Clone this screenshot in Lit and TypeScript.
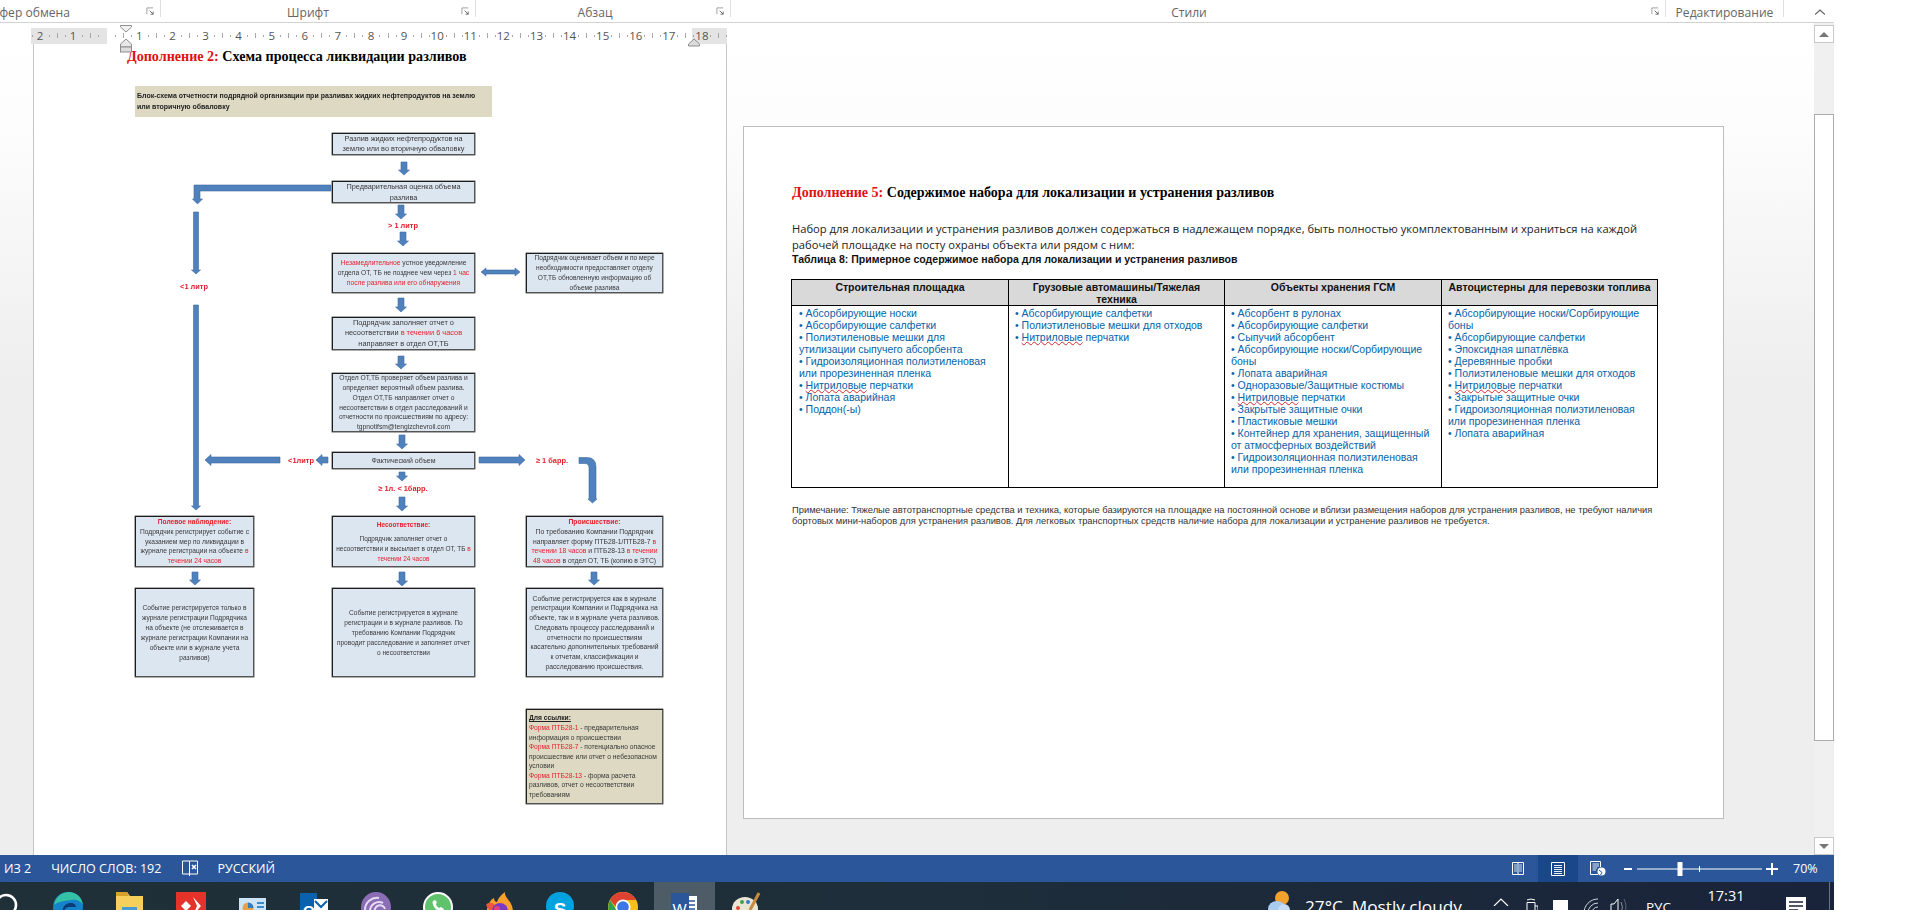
import {LitElement, html, css, svg} from 'lit';
import {customElement} from 'lit/decorators.js';

// canvas origin of the first page, node coords below are screen coords
const OX = 33;
const OY = 44;

const r = (t: string) => html`<span class="red">${t}</span>`;
const rb = (t: string) => html`<span class="red bold">${t}</span>`;

const NODES = [
  {x: 332, y: 133, w: 143, h: 22, fs: 7.3, lh: 10, t: html`Разлив жидких нефтепродуктов на<br />землю или во вторичную обваловку`},
  {x: 332, y: 181, w: 143, h: 22, fs: 7.3, lh: 11, t: html`Предварительная оценка объема<br />разлива`},
  {x: 332, y: 253, w: 143, h: 40, fs: 6.7, lh: 10, t: html`${r('Незамедлительное')} устное уведомление<br />отдела ОТ, ТБ не позднее чем через ${r('1 час')}<br />${r('после разлива или его обнаружения')}`},
  {x: 526, y: 253, w: 137, h: 40, fs: 6.6, lh: 10, t: html`Подрядчик оценивает объем и по мере<br />необходимости предоставляет отделу<br />ОТ,ТБ обновленную информацию об<br />объеме разлива`},
  {x: 332, y: 317, w: 143, h: 33, fs: 7.4, lh: 10.5, t: html`Подрядчик заполняет отчет о<br />несоответствии ${r('в течении 6 часов')}<br />направляет в отдел ОТ,ТБ`},
  {x: 332, y: 373, w: 143, h: 59, fs: 6.7, lh: 9.8, t: html`Отдел ОТ,ТБ проверяет объем разлива и<br />определяет вероятный объем разлива.<br />Отдел ОТ,ТБ направляет отчет о<br />несоответствии в отдел расследований и<br />отчетности по происшествиям по адресу:<br />tgpnotifsm@tengizchevroil.com`},
  {x: 332, y: 452, w: 143, h: 17, fs: 7, lh: 10, t: html`Фактический объем`},
  {x: 135, y: 516, w: 119, h: 51, fs: 6.65, lh: 9.7, t: html`${rb('Полевое наблюдение:')}<br />Подрядчик регистрирует событие с<br />указанием мер по ликвидации в<br />журнале регистрации на объекте ${r('в')}<br />${r('течении 24 часов')}`},
  {x: 332, y: 516, w: 143, h: 51, fs: 6.45, lh: 9.7, t: html`${rb('Несоответствие:')}<br /><span class="gap"></span>Подрядчик заполняет отчет о<br />несоответствии и высылает в отдел ОТ, ТБ ${r('в')}<br />${r('течении 24 часов')}`},
  {x: 526, y: 516, w: 137, h: 51, fs: 6.8, lh: 9.7, t: html`${rb('Происшествие:')}<br />По требованию Компании Подрядчик<br />направляет форму ПТБ28-1/ПТБ28-7 ${r('в')}<br />${r('течении 18 часов')} и ПТБ28-13 ${r('в течении')}<br />${r('48 часов')} в отдел ОТ, ТБ (копию в ЭТС)`},
  {x: 135, y: 588, w: 119, h: 89, fs: 6.6, lh: 10, t: html`Событие регистрируется только в<br />журнале регистрации Подрядчика<br />на объекте (не отслеживается в<br />журнале регистрации Компании на<br />объекте или в журнале учета<br />разливов)`},
  {x: 332, y: 588, w: 143, h: 89, fs: 6.55, lh: 10, t: html`Событие регистрируется в журнале<br />регистрации и в журнале разливов. По<br />требованию Компании Подрядчик<br />проводит расследование и заполняет отчет<br />о несоответствии`},
  {x: 526, y: 588, w: 137, h: 89, fs: 6.75, lh: 9.7, t: html`Событие регистрируется как в журнале<br />регистрации Компании и Подрядчика на<br />объекте, так и в журнале учета разливов.<br />Следовать процессу расследований и<br />отчетности по происшествиям<br />касательно дополнительных требований<br />к отчетам, классификации и<br />расследованию происшествия.`},
];

const LABELS = [
  {x: 403, y: 225, t: '> 1 литр'},
  {x: 194, y: 286, t: '<1 литр'},
  {x: 301, y: 460, t: '<1литр'},
  {x: 552, y: 460, t: '≥ 1 барр.'},
  {x: 403, y: 488, t: '≥ 1л. < 1барр.'},
];

// [x, y1, y2]
const DOWN: number[][] = [
  [404, 162, 175], [401, 205, 219], [403, 232, 246], [401, 298, 312], [401, 356, 369],
  [402, 435, 449], [402, 472, 481], [402, 497, 511], [195, 572, 585], [402, 572, 586], [594, 572, 585],
];

function down(x: number, y1: number, y2: number, s = 3, h = 5.5, hl = 5) {
  return `M${x - s} ${y1}H${x + s}V${y2 - hl}H${x + h}L${x} ${y2}L${x - h} ${y2 - hl}H${x - s}Z`;
}
function left(x1: number, x2: number, y: number) {
  return `M${x2} ${y - 3}V${y + 3}H${x1 + 6}V${y + 5.5}L${x1} ${y}L${x1 + 6} ${y - 5.5}V${y - 3}Z`;
}
function right(x1: number, x2: number, y: number) {
  return `M${x1} ${y - 3}V${y + 3}H${x2 - 6}V${y + 5.5}L${x2} ${y}L${x2 - 6} ${y - 5.5}V${y - 3}Z`;
}

const ARROWS = [
  ...DOWN.map(([x, a, b]) => down(x, a, b)),
  down(196, 212, 274, 2.5, 4.5, 4),
  down(196, 305, 510, 2.5, 4.5, 4),
  'M331 185H194V199H192.5L197.5 204L202.5 199H200V191H331Z',
  `M481 272L486 268V270H515V268L520 272L515 276V274H486V276Z`,
  left(205, 280, 460),
  left(316, 328, 460),
  right(479, 525, 460),
  'M579 457.5H587Q596 457.5 596 467V499H597L592.5 503L588 499H589V468Q589 463.5 585 463.5H579Z',
];

const COLS = [
  {
    head: html`Строительная площадка`,
    items: [
      'Абсорбирующие носки', 'Абсорбирующие салфетки', 'Полиэтиленовые мешки для\nутилизации сыпучего абсорбента',
      'Гидроизоляционная полиэтиленовая\nили прорезиненная пленка', 'Нитриловые перчатки', 'Лопата аварийная', 'Поддон(-ы)',
    ],
  },
  {
    head: html`Грузовые автомашины/Тяжелая<br />техника`,
    items: ['Абсорбирующие салфетки', 'Полиэтиленовые мешки для отходов', 'Нитриловые перчатки'],
  },
  {
    head: html`Объекты хранения ГСМ`,
    items: [
      'Абсорбент в рулонах', 'Абсорбирующие салфетки', 'Сыпучий абсорбент', 'Абсорбирующие носки/Сорбирующие\nбоны',
      'Лопата аварийная', 'Одноразовые/Защитные костюмы', 'Нитриловые перчатки', 'Закрытые защитные очки', 'Пластиковые мешки',
      'Контейнер для хранения, защищенный\nот атмосферных воздействий', 'Гидроизоляционная полиэтиленовая\nили прорезиненная пленка',
    ],
  },
  {
    head: html`Автоцистерны для перевозки топлива`,
    items: [
      'Абсорбирующие носки/Сорбирующие\nбоны', 'Абсорбирующие салфетки', 'Эпоксидная шпатлёвка', 'Деревянные пробки',
      'Полиэтиленовые мешки для отходов', 'Нитриловые перчатки', 'Закрытые защитные очки',
      'Гидроизоляционная полиэтиленовая\nили прорезиненная пленка', 'Лопата аварийная',
    ],
  },
];

const RULER = ['2', '1', '', ...Array.from({length: 18}, (_, i) => String(i + 1)), ''];

const launcher = svg`<svg class="launcher" viewBox="0 0 10 10"><path d="M1 8V1H8" fill="none" stroke="#9a9a9a"/><path d="M4 4L8 8M8 5V8H5" fill="none" stroke="#666"/></svg>`;

const TASK_ICONS = [
  svg`<circle cx="15" cy="13" r="10" fill="none" stroke="#fff" stroke-width="2.6"/>`,
  svg`<circle cx="15" cy="15" r="15" fill="#1583c9"/><path d="M1 13C3 3 11 0 16 0c7 0 13 5 14 13c-2-4-7-6-12-5C10 9 5 10 1 13Z" fill="#35c1a6"/><path d="M10 22c-2-7 3-11 8-11c3 0 5 2 5 4H16c-3 0-5 3-6 7Z" fill="#0c3d78"/>`,
  svg`<path d="M2 0H13L16 4H29V30H2Z" fill="#f6cf5c"/><path d="M2 0H13L15 4H2Z" fill="#d9a02a"/><rect x="8" y="15" width="15" height="15" fill="#4a9bd4"/>`,
  svg`<rect width="30" height="30" fill="#e5332a"/><path d="M10 9L15 14L10 19L5 14Z" fill="#fff"/><path d="M17 5L25 14L17 23L21 14Z" fill="#fff"/>`,
  svg`<rect x="1" y="6" width="27" height="22" fill="#cbe4f7"/><circle cx="10" cy="16" r="5.5" fill="#e9a04c"/><path d="M10 16V10.5A5.5 5.5 0 0 1 15.5 16Z" fill="#2f7fc1"/><path d="M19 11h7M19 15h7M19 19h7" stroke="#3a8bcb" stroke-width="2"/>`,
  svg`<rect x="1" y="1" width="17" height="29" fill="#0a62ae"/><rect x="15" y="7" width="14" height="14" fill="#fff"/><path d="M16 9l6 6l6-6" fill="none" stroke="#0a62ae" stroke-width="2"/><text x="4" y="24" font-family="Liberation Sans" font-weight="700" font-size="15" fill="#fff">O</text>`,
  svg`<circle cx="15" cy="15" r="15" fill="#8a6db5"/><path d="M9 30V19A9 9 0 0 1 22 11M14 30V20A5 5 0 0 1 24 17M4 28V18A12 12 0 0 1 18 6" fill="none" stroke="#e5dcf2" stroke-width="2"/>`,
  svg`<circle cx="15" cy="15" r="14" fill="#5fc26c" stroke="#fff" stroke-width="2"/><path d="M10 9c-2 4 4 11 9 11l2-3l-3-2l-2 1c-2-1-3-3-3-4l1-2l-2-2Z" fill="#fff"/>`,
  svg`<path d="M2 30C0 18 4 8 9 6C9 9 11 10 12 10C13 6 16 3 20 0C19 6 28 9 28 20V30Z" fill="#f9a02c"/><path d="M1 13c2-3 6-3 9 0l-4 8Z" fill="#f0563a"/><circle cx="15" cy="19" r="8" fill="#7a3bc0"/><circle cx="12" cy="17" r="3" fill="#e8407a"/>`,
  svg`<circle cx="14" cy="14" r="14" fill="#00a3e0"/><text x="14" y="24" text-anchor="middle" font-family="Liberation Sans" font-weight="700" font-size="19" fill="#fff">S</text>`,
  svg`<circle cx="15" cy="15" r="15" fill="#f2c21a"/><path d="M15 0A15 15 0 0 1 28 8H15A7 7 0 0 0 8 15L2 8A15 15 0 0 1 15 0Z" fill="#dd4132"/><path d="M2 8L9 19L15 30A15 15 0 0 1 2 8Z" fill="#2fa24f"/><circle cx="15" cy="15" r="7.5" fill="#fff"/><circle cx="15" cy="15" r="5.8" fill="#3b78e7"/>`,
  svg`<rect x="14" y="4" width="13" height="24" fill="#fff"/><path d="M17 9h8M17 13h8M17 17h8M17 21h8" stroke="#2b579a" stroke-width="1.6"/><rect x="1" y="1" width="18" height="29" fill="#2b579a"/><text x="2.5" y="22" font-family="Liberation Sans" font-size="15" fill="#fff">W</text>`,
  svg`<ellipse cx="14" cy="17" rx="13" ry="12" fill="#e9e5d3"/><circle cx="7" cy="16" r="2" fill="#e0483c"/><circle cx="11" cy="10" r="2" fill="#3fa34d"/><circle cx="17" cy="10" r="2" fill="#3a78c9"/><circle cx="9" cy="22" r="2" fill="#e5b42c"/><path d="M19 18L28 1" stroke="#c98a3a" stroke-width="3"/>`,
];

@customElement('app-root')
export class AppRoot extends LitElement {
  static styles = css`
    :host {
      display: block;
      width: 1920px;
      height: 910px;
      background: #fff;
      overflow: hidden;
      font-family: 'Liberation Sans', sans-serif;
    }
    .window {
      width: 1834px;
      height: 910px;
      display: flex;
      flex-direction: column;
    }

    /* ribbon labels */
    .ribbon {
      height: 22px;
      flex: none;
      display: flex;
      border-bottom: 1px solid #d2d2d2;
      font: 12.1px 'Open Sans', sans-serif;
      color: #666;
    }
    .group {
      position: relative;
      height: 10px;
      padding-top: 7px;
      display: flex;
      justify-content: center;
      align-items: center;
      box-sizing: content-box;
      border-right: 1px solid #e0e0e0;
      white-space: nowrap;
    }
    .launcher {
      position: absolute;
      right: 5px;
      top: 7px;
      width: 9px;
      height: 9px;
    }
    .collapse {
      margin-left: 31px;
      margin-top: 9px;
      width: 10px;
      height: 6px;
    }

    /* document area */
    .work {
      flex: 1;
      display: flex;
      min-height: 0;
    }
    .doc {
      flex: 1;
      display: flex;
      padding-left: 31px;
      background: linear-gradient(#fff 0, #fdfdfd 100px, #eeeeee 360px);
      overflow: hidden;
    }
    .left-col {
      position: relative;
      width: 696px;
      display: flex;
      flex-direction: column;
    }
    .ruler {
      margin-top: 5px;
      height: 16px;
      flex: none;
      background: linear-gradient(90deg, #e4e4e4 76px, #fff 76px, #fff 661px, #e4e4e4 661px);
      overflow: hidden;
      display: flex;
      position: relative;
      z-index: 2;
    }
    .ruler-cells {
      display: flex;
      margin-left: -7.5px;
    }
    .cell {
      width: 33.1px;
      flex: none;
      text-align: center;
      font: 11.5px/16px 'Open Sans', sans-serif;
      color: #555;
      background-image: linear-gradient(#a8a8a8, #a8a8a8), linear-gradient(#a8a8a8, #a8a8a8), linear-gradient(#a8a8a8, #a8a8a8);
      background-repeat: no-repeat;
      background-size: 1px 2px, 1px 5px, 1px 2px;
      background-position: 8px 7px, 0 5px, 25px 7px;
    }
    .marks {
      position: absolute;
      left: 0;
      top: 0;
      z-index: 3;
    }
    .page1 {
      position: relative;
      flex: 1;
      margin-left: 2px;
      background: #fff;
      border-left: 1px solid #c6c6c6;
      border-right: 1px solid #c6c6c6;
      box-sizing: border-box;
      overflow: hidden;
    }
    .title1 {
      font: 700 14.1px/16px 'Liberation Serif', serif;
      color: #000;
      padding: 4px 0 0 93px;
      white-space: nowrap;
    }
    .title-red {
      color: #e01010;
    }
    .chart {
      position: absolute;
      left: -1px;
      top: 0;
      width: 694px;
      height: 811px;
      filter: blur(0.35px);
    }
    .chart svg {
      position: absolute;
      left: 0;
      top: 0;
    }
    .banner {
      position: absolute;
      background: #ddd9c3;
      font-weight: 700;
      color: #222;
      font-size: 7px;
      line-height: 11px;
      padding: 4px 2px;
      box-sizing: border-box;
      white-space: nowrap;
    }
    .node {
      position: absolute;
      box-sizing: border-box;
      display: flex;
      align-items: center;
      justify-content: center;
      text-align: center;
      white-space: nowrap;
      background: #dce6f1;
      border: 1px solid #1d1d1d;
      border-bottom-color: #555;
      border-right-color: #555;
      box-shadow: 0 0 0 0.4px #333;
      color: #383838;
    }
    .legend {
      background: #ddd9c3;
      justify-content: flex-start;
      text-align: left;
      padding-left: 2px;
    }
    .red {
      color: #e4202c;
    }
    .bold {
      font-weight: 700;
    }
    .gap {
      display: block;
      height: 5px;
    }
    .legend-head {
      font-weight: 700;
      text-decoration: underline;
      color: #222;
    }
    .tag {
      position: absolute;
      transform: translate(-50%, -50%);
      color: #e4202c;
      font-weight: 700;
      font-size: 7.4px;
      white-space: nowrap;
    }

    /* second page */
    .page2 {
      margin: 103px 0 0 16px;
      width: 981px;
      height: 693px;
      flex: none;
      box-sizing: border-box;
      background: #fff;
      border: 1px solid #bdbdbd;
      padding: 56px 0 0 48px;
    }
    .title2 {
      font: 700 14.03px/18px 'Liberation Serif', serif;
      color: #000;
      white-space: nowrap;
    }
    .para {
      margin-top: 20px;
      font: 11.2px/16px 'Open Sans', sans-serif;
      color: #222;
      white-space: nowrap;
    }
    .caption {
      font: 700 10.55px/13px 'Liberation Sans', sans-serif;
      color: #111;
      white-space: nowrap;
    }
    table {
      margin: 13px 0 0 -1px;
      border-collapse: collapse;
      table-layout: fixed;
      width: 866px;
      font-size: 10.5px;
      line-height: 12px;
    }
    th {
      height: 25px;
      box-sizing: border-box;
      background: #d9d9d9;
      border: 1px solid #000;
      font-weight: 700;
      color: #111;
      vertical-align: top;
      padding: 1px 0 0;
      white-space: nowrap;
      line-height: 12px;
    }
    td {
      height: 182px;
      box-sizing: border-box;
      border: 1px solid #000;
      vertical-align: top;
      padding: 1px 0 0 6px;
      color: #0563a8;
      white-space: pre-line;
    }
    td:first-child {
      padding-left: 7px;
    }
    .sp {
      text-decoration: underline wavy #d0282c 1px;
      text-underline-offset: 0;
    }
    .note {
      margin-top: 17px;
      font-size: 9.35px;
      line-height: 11px;
      color: #333;
      white-space: nowrap;
    }

    /* scrollbar */
    .scroll {
      width: 20px;
      flex: none;
      display: flex;
      flex-direction: column;
      background: #f0f0f0;
      padding-top: 2px;
      box-sizing: border-box;
    }
    .sbtn {
      height: 18px;
      flex: none;
      box-sizing: border-box;
      background: #fff;
      border: 1px solid #c8c8c8;
      display: flex;
      align-items: center;
      justify-content: center;
    }
    .track {
      flex: 1;
      padding-top: 71px;
      padding-bottom: 96px;
      display: flex;
    }
    .thumb {
      flex: 1;
      background: #fff;
      border: 1px solid #ababab;
    }

    /* status bar */
    .status {
      height: 27px;
      flex: none;
      background: #2b579a;
      color: #fff;
      display: flex;
      align-items: center;
      font: 12.5px 'Open Sans', sans-serif;
      white-space: nowrap;
    }
    .status .sp1 {
      margin-left: 4px;
    }
    .status .sp2 {
      margin-left: 20px;
    }
    .status .sp3 {
      margin-left: 20px;
      display: flex;
    }
    .status .sp4 {
      margin-left: 18px;
    }
    .status-right {
      margin-left: auto;
      display: flex;
      align-items: center;
      height: 100%;
    }
    .view {
      height: 100%;
      display: flex;
      align-items: center;
      justify-content: center;
      width: 40px;
    }
    .view.on {
      background: #19478a;
    }
    .zoom {
      display: flex;
      margin: 0 15px 0 6px;
    }
    .pct {
      width: 24px;
      margin-right: 17px;
      text-align: center;
    }

    /* taskbar */
    .taskbar {
      height: 28px;
      flex: none;
      display: flex;
      overflow: hidden;
      background: linear-gradient(90deg, #1f3038, #1e2e3a 50%, #19233a);
      position: relative;
    }
    .task {
      width: 61.7px;
      flex: none;
      display: flex;
      justify-content: center;
      padding-top: 10px;
      box-sizing: border-box;
      height: 48px;
    }
    .task svg {
      width: 30px;
      height: 30px;
      flex: none;
    }
    .task.on {
      background: #4d5c66;
    }
    .tasks {
      display: flex;
      margin-left: -24.85px;
    }
    .tray {
      margin-left: auto;
      display: flex;
      color: #fff;
      white-space: nowrap;
      font-family: 'Open Sans', sans-serif;
      width: 567px;
      height: 48px;
      flex: none;
    }
    .weather {
      width: 24px;
      height: 30px;
      margin-top: 8px;
      flex: none;
    }
    .wtext {
      margin-left: 14px;
      width: 188px;
      font-size: 17.2px;
      line-height: 20px;
      padding-top: 15px;
      color: #fff;
    }
    .tico {
      margin-top: 16px;
      flex: none;
    }
    .lang {
      margin-left: 18px;
      font-size: 13.5px;
      line-height: 16px;
      padding-top: 17px;
      width: 28px;
    }
    .clock {
      margin-left: 32px;
      font-size: 14.5px;
      line-height: 18px;
      padding-top: 5px;
      width: 40px;
      text-align: center;
    }
    .notif {
      margin: 15px 0 0 40px;
      flex: none;
    }
    .edge-line {
      position: absolute;
      left: 1829px;
      top: 0;
      width: 1px;
      height: 100%;
      background: #6a7480;
    }
  `;

  private renderRuler() {
    return html`<div class="ruler">
      <div class="ruler-cells">${RULER.map((n) => html`<div class="cell">${n}</div>`)}</div>
    </div>`;
  }

  private renderMarks() {
    return html`<svg class="marks" width="696" height="30" viewBox="0 0 696 30">
      <path d="M89.5 2.5H100.5V4L95 9L89.5 4Z" fill="#f2f2f2" stroke="#8f8f8f" />
      <path d="M95 16L100.5 21V24H89.5V21Z" fill="#e8e8e8" stroke="#8f8f8f" />
      <rect x="89.5" y="24" width="11" height="5" fill="#dcdcdc" stroke="#8f8f8f" />
      <path d="M663 16L668.5 21V23H657.5V21Z" fill="#dcdcdc" stroke="#8f8f8f" />
    </svg>`;
  }

  private renderChart() {
    return html`<div class="chart">
      <div class="banner" style="left:${135 - OX}px;top:${86 - OY}px;width:357px;height:31px">
        Блок-схема отчетности подрядной организации при разливах жидких нефтепродуктов на землю<br />или вторичную обваловку
      </div>
      ${NODES.map(
        (n) => html`<div class="node" style="left:${n.x - OX}px;top:${n.y - OY}px;width:${n.w}px;height:${n.h}px;font-size:${n.fs}px;line-height:${n.lh}px"><div>${n.t}</div></div>`,
      )}
      <div class="node legend" style="left:${526 - OX}px;top:${709 - OY}px;width:137px;height:95px;font-size:6.7px;line-height:9.6px">
        <div>
          <span class="legend-head">Для ссылки:</span><br />
          ${r('Форма ПТБ28-1')} - предварительная<br />информация о происшествии<br />
          ${r('Форма ПТБ28-7')} - потенциально опасное<br />происшествие или отчет о небезопасном<br />условии<br />
          ${r('Форма ПТБ28-13')} - форма расчета<br />разливов, отчет о несоответствии<br />требованиям
        </div>
      </div>
      ${LABELS.map((l) => html`<div class="tag" style="left:${l.x - OX}px;top:${l.y - OY}px">${l.t}</div>`)}
      <svg width="694" height="811" viewBox="${OX} ${OY} 694 811">
        ${ARROWS.map((d) => svg`<path d=${d} fill="#4f81bd" stroke="#3f6c9f" stroke-width="0.6"/>`)}
      </svg>
    </div>`;
  }

  private renderItem(text: string) {
    const key = 'Нитриловые';
    if (text.startsWith(key)) {
      return html`• <span class="sp">${key}</span>${text.slice(key.length)}`;
    }
    return html`• ${text}`;
  }

  private renderPage2() {
    return html`<div class="page2">
      <div class="title2"><span class="title-red">Дополнение 5:</span> Содержимое набора для локализации и устранения разливов</div>
      <div class="para">
        Набор для локализации и устранения разливов должен содержаться в надлежащем порядке, быть полностью укомплектованным и храниться на каждой<br />
        рабочей площадке на посту охраны объекта или рядом с ним:
      </div>
      <div class="caption">Таблица 8: Примерное содержимое набора для локализации и устранения разливов</div>
      <table>
        <colgroup><col style="width:217px" /><col style="width:216px" /><col style="width:217px" /><col style="width:216px" /></colgroup>
        <tr>${COLS.map((c) => html`<th>${c.head}</th>`)}</tr>
        <tr>${COLS.map((c) => html`<td>${c.items.map((t) => html`<div>${this.renderItem(t)}</div>`)}</td>`)}</tr>
      </table>
      <div class="note">
        Примечание: Тяжелые автотранспортные средства и техника, которые базируются на площадке на постоянной основе и вблизи размещения наборов для устранения разливов, не требуют наличия<br />
        бортовых мини-наборов для устранения разливов. Для легковых транспортных средств наличие набора для локализации и устранение разливов не требуется.
      </div>
    </div>`;
  }

  private renderStatus() {
    return html`<div class="status">
      <span class="sp1">ИЗ 2</span>
      <span class="sp2">ЧИСЛО СЛОВ: 192</span>
      <span class="sp3"
        ><svg width="18" height="17" viewBox="0 0 18 17" fill="none" stroke="#fff">
          <path d="M8.5 1H1.5V14H8.5M8.5 1V16M8.5 1H16.5V14H8.5" />
          <path d="M11 5L15 9M15 5L11 9" stroke-width="1.6" /></svg
      ></span>
      <span class="sp4">РУССКИЙ</span>
      <div class="status-right">
        <div class="view">
          <svg width="12" height="15" viewBox="0 0 12 15" fill="none" stroke="#fff"><path d="M6 1V14M.5 1.5H11.5V13.5H.5Z" /><path d="M2 4H5M2 6H5M2 8H5M2 10H5M7 4H10M7 6H10M7 8H10M7 10H10" stroke-width=".8" /></svg>
        </div>
        <div class="view on">
          <svg width="14" height="14" viewBox="0 0 14 14" fill="none" stroke="#fff"><path d="M.5.5H13.5V13.5H.5Z" /><path d="M3 3.5H11M3 5.5H11M3 7.5H11M3 9.5H11M3 11.5H11" stroke-width=".9" /></svg>
        </div>
        <div class="view">
          <svg width="16" height="15" viewBox="0 0 16 15" fill="none" stroke="#fff"><path d="M8 13.5H.5V.5H10.5V6" /><path d="M2.5 3H9M2.5 5H9M2.5 7H7M2.5 9H6" stroke-width=".9" /><circle cx="11.5" cy="10.5" r="4" fill="#fff" stroke="none" /><path d="M9 9L12 11.5L10.5 14" stroke="#2b579a" /></svg>
        </div>
        <svg class="zoom" width="154" height="14" viewBox="0 0 154 14" fill="#fff">
          <rect x="0" y="6" width="8" height="2" />
          <rect x="13" y="6.5" width="125" height="1" />
          <rect x="53.5" y="0" width="5" height="14" />
          <rect x="75" y="4" width="1" height="6" />
          <path d="M142 6H147V1H149V6H154V8H149V13H147V8H142Z" />
        </svg>
        <span class="pct">70%</span>
      </div>
    </div>`;
  }

  private renderTaskbar() {
    return html`<div class="taskbar">
      <div class="tasks">
        ${TASK_ICONS.map((ic, i) => html`<div class="task ${i === 11 ? 'on' : ''}"><svg viewBox="0 0 30 30">${ic}</svg></div>`)}
      </div>
      <div class="tray">
        <svg class="weather" viewBox="0 0 24 30">
          <circle cx="15" cy="8" r="7" fill="#f2a12c" />
          <ellipse cx="10" cy="19" rx="9" ry="8" fill="#a9cbf0" />
          <circle cx="17" cy="20" r="6" fill="#c7dcf5" />
        </svg>
        <div class="wtext">27°C&nbsp; Mostly cloudy</div>
        <svg class="tico" width="16" height="8" viewBox="0 0 16 8" fill="none" stroke="#fff" stroke-width="1.2"><path d="M1 8L8 1L15 8" /></svg>
        <svg class="tico" style="margin-left:17px" width="12" height="18" viewBox="0 0 12 18" fill="none" stroke="#fff"><path d="M1 2Q5 0 9 2M1 4.5H9V18H1ZM9 8H12V15H9" /></svg>
        <svg class="tico" style="margin-left:14px" width="18" height="16" viewBox="0 0 18 16"><rect x="1" y="2" width="15" height="14" fill="#fff" /></svg>
        <svg class="tico" style="margin-left:13px" width="16" height="16" viewBox="0 0 16 16" fill="none" stroke="#cfd5dc"><path d="M1 16A14 14 0 0 1 15 1M5 16A10 10 0 0 1 15 5M9 16A6 6 0 0 1 15 9" /></svg>
        <svg class="tico" style="margin-left:11px" width="18" height="16" viewBox="0 0 18 16" fill="none" stroke="#fff"><path d="M1 6H4L8 1V16H1Z" /><path d="M11 4Q14 9 11 15" stroke="#8a93a0" /><path d="M14 1Q18 9 14 16" stroke="#596270" /></svg>
        <div class="lang">РУС</div>
        <div class="clock">17:31</div>
        <svg class="notif" width="20" height="20" viewBox="0 0 20 20"><rect width="20" height="20" fill="#fff" /><path d="M3 5H17M3 9H17M3 13H12" stroke="#1a2233" stroke-width="1.4" /></svg>
      </div>
      <div class="edge-line"></div>
    </div>`;
  }

  render() {
    return html`<div class="window">
      <div class="ribbon">
        <div class="group" style="width:160px"><span style="margin-left:-104px">Буфер обмена</span>${launcher}</div>
        <div class="group" style="width:294px;padding-right:20px">Шрифт${launcher}</div>
        <div class="group" style="width:238px;padding-right:16px">Абзац${launcher}</div>
        <div class="group" style="width:916px;padding-right:18px">Стили${launcher}</div>
        <div class="group" style="width:117px">Редактирование</div>
        <svg class="collapse" viewBox="0 0 10 6" fill="none" stroke="#666" stroke-width="1.3"><path d="M0 5.5L5 1L10 5.5" /></svg>
      </div>
      <div class="work">
        <div class="doc">
          <div class="left-col">
            ${this.renderRuler()}
            <div class="page1">
              <div class="title1"><span class="title-red">Дополнение 2:</span> Схема процесса ликвидации разливов</div>
              ${this.renderChart()}
            </div>
            ${this.renderMarks()}
          </div>
          ${this.renderPage2()}
        </div>
        <div class="scroll">
          <div class="sbtn"><svg width="10" height="5" viewBox="0 0 10 5"><path d="M0 5L5 0L10 5Z" fill="#777" /></svg></div>
          <div class="track"><div class="thumb"></div></div>
          <div class="sbtn"><svg width="10" height="5" viewBox="0 0 10 5"><path d="M0 0L5 5L10 0Z" fill="#777" /></svg></div>
        </div>
      </div>
      ${this.renderStatus()} ${this.renderTaskbar()}
    </div>`;
  }
}
